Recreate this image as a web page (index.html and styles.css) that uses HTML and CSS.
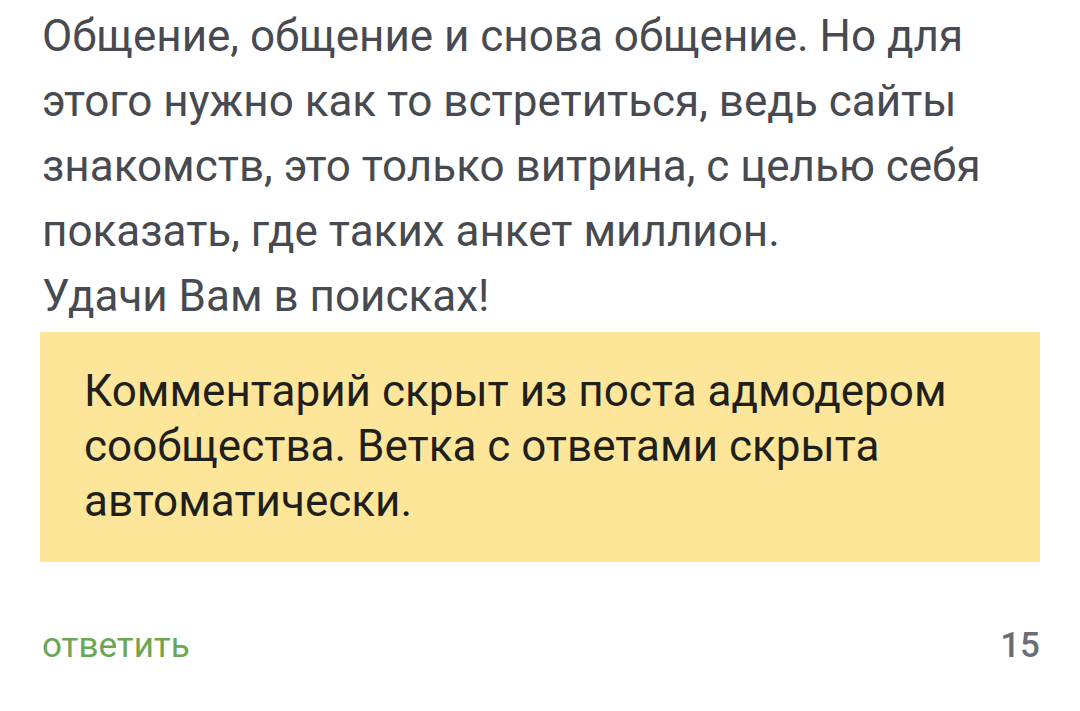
FILE: index.html
```html
<!DOCTYPE html>
<html lang="ru">
<head>
    <meta charset="UTF-8">
    <meta name="viewport" content="width=device-width, initial-scale=1.0">
    <title>Комментарий</title>
    <link rel="stylesheet" href="styles.css">
</head>
<body>
    <div class="comment">
        <p class="comment-text">Общение, общение и снова общение. Но для этого нужно как то встретиться, ведь сайты знакомств, это только витрина, с целью себя показать, где таких анкет миллион.<br>Удачи Вам в поисках!</p>
        <div class="hidden-note">Комментарий скрыт из поста адмодером сообщества. Ветка с ответами скрыта автоматически.</div>
        <div class="comment-footer">
            <a class="reply" href="#">ответить</a>
            <span class="rating">15</span>
        </div>
    </div>
</body>
</html>
```

FILE: styles.css
```css
body { margin: 0; background-color: #fff; font-family: Roboto, "Noto Sans", sans-serif; }
.comment { padding: 4px 40px 0 40px; }
.comment-text {
    margin: 0;
    padding-left: 2px;
    font-size: 44px;
    line-height: 65px;
    color: #474a50;
}
.hidden-note {
    margin-top: 3px;
    background-color: #fde69a;
    padding: 32px 40px 33px 44px;
    font-size: 44px;
    line-height: 55px;
    color: #1f1f1c;
}
.comment-footer {
    display: flex;
    justify-content: space-between;
    align-items: baseline;
    margin-top: 60px;
    padding-left: 2px;
    line-height: 48px;
}
.reply { color: #6aa653; text-decoration: none; font-size: 35px; }
.rating { color: #6b6d74; font-size: 35px; font-weight: 500; }
```
